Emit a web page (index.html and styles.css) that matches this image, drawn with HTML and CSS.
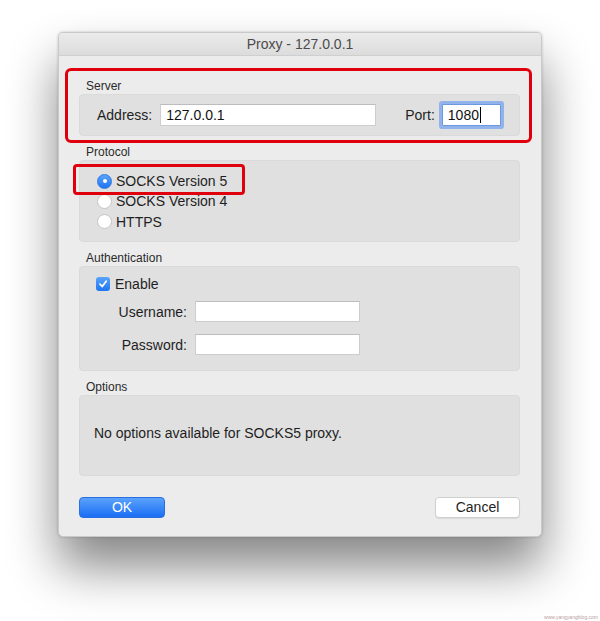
FILE: index.html
```html
<!DOCTYPE html>
<html>
<head>
<meta charset="utf-8">
<title>Proxy - 127.0.0.1</title>
<link rel="stylesheet" href="styles.css">
</head>
<body>
<div class="stage">
  <div class="window">
    <div class="titlebar">Proxy - 127.0.0.1</div>
    <div class="content">
      <div class="section-label first">Server</div>
      <div class="group server">
        <span class="lbl">Address:</span>
        <div class="input addr">127.0.0.1</div>
        <span class="lbl port-lbl">Port:</span>
        <div class="input port focused">1080<span class="caret"></span></div>
      </div>

      <div class="section-label">Protocol</div>
      <div class="group protocol">
        <div class="radio-row"><span class="radio on"></span>SOCKS Version 5</div>
        <div class="radio-row"><span class="radio"></span>SOCKS Version 4</div>
        <div class="radio-row last"><span class="radio"></span>HTTPS</div>
      </div>

      <div class="section-label">Authentication</div>
      <div class="group auth">
        <div class="check-row">
          <span class="checkbox"><svg width="10" height="10" viewBox="0 0 10 10"><path d="M2 5.2 L4.2 7.5 L8.2 2.2" fill="none" stroke="#fff" stroke-width="1.8" stroke-linecap="round" stroke-linejoin="round"/></svg></span>Enable
        </div>
        <div class="cred-grid">
          <span class="cred-lbl">Username:</span>
          <div class="input cred"></div>
          <span class="cred-lbl">Password:</span>
          <div class="input cred"></div>
        </div>
      </div>

      <div class="section-label">Options</div>
      <div class="group options">No options available for SOCKS5 proxy.</div>

      <div class="buttons">
        <div class="btn ok">OK</div>
        <div class="btn cancel">Cancel</div>
      </div>
    </div>
    <div class="annot annot-server"></div>
    <div class="annot annot-socks"></div>
  </div>
</div>
<div class="watermark">www.yangyangblog.com</div>
</body>
</html>
```
FILE: styles.css
```css
html, body {
  margin: 0;
  padding: 0;
  background: #ffffff;
  width: 600px;
  height: 621px;
  overflow: hidden;
  font-family: "Liberation Sans", Arial, sans-serif;
  color: #1e1e1e;
}

.stage {
  padding: 32px 0 0 58px;
}

.window {
  position: relative;
  width: 484px;
  height: 505px;
  box-sizing: border-box;
  background: #ececec;
  border: 1px solid #c9c9c9;
  border-radius: 5px;
  box-shadow: 0 30px 50px rgba(0, 0, 0, 0.48), 0 0 3px rgba(0, 0, 0, 0.2);
}

.titlebar {
  height: 22px;
  line-height: 23px;
  text-align: center;
  font-size: 14px;
  color: #4b4b4b;
  background: linear-gradient(#ebebeb, #dcdcdc);
  border-bottom: 1px solid #cfcfcf;
  border-radius: 4px 4px 0 0;
}

.content {
  display: flex;
  flex-direction: column;
  padding: 0 21px 0 20px;
}

.section-label {
  height: 16px;
  line-height: 16px;
  font-size: 12px;
  color: #2a2a2a;
  padding-left: 7px;
  margin-top: 8px;
}
.section-label.first {
  margin-top: 22px;
}

.group {
  box-sizing: border-box;
  background: #e0e0e0;
  border: 1px solid #dadada;
  border-radius: 4px;
  font-size: 14px;
}

.server {
  height: 42px;
  display: flex;
  align-items: center;
  padding-left: 17px;
}
.lbl {
  margin-right: 8px;
}
.port-lbl {
  margin-left: 29px;
  margin-right: 7px;
}

.input {
  box-sizing: border-box;
  background: #ffffff;
  border: 1px solid #cdcdcd;
  border-top-color: #bdbdbd;
  height: 22px;
  line-height: 20px;
  padding-left: 5px;
  font-size: 14px;
  color: #111;
}
.addr {
  width: 216px;
}
.port {
  width: 59px;
  display: flex;
  align-items: center;
}
.focused {
  border-color: #6c98e0;
  box-shadow: 0 0 0 3px #92b2ec;
  border-radius: 1px;
}
.caret {
  display: inline-block;
  width: 1px;
  height: 16px;
  background: #000;
  margin-left: 1px;
}

.protocol {
  height: 82px;
  padding-top: 10px;
  padding-left: 17px;
}
.radio-row {
  height: 20px;
  display: flex;
  align-items: center;
}
.radio-row.last {
  height: 21px;
}
.radio {
  box-sizing: border-box;
  width: 15px;
  height: 15px;
  border-radius: 50%;
  background: #ffffff;
  border: 1px solid #c4c4c4;
  margin-right: 4px;
  position: relative;
}
.radio.on {
  background: linear-gradient(#5aa4fb, #1f74f3);
  border-color: #2f78e6;
}
.radio.on::after {
  content: "";
  position: absolute;
  left: 4.5px;
  top: 4.5px;
  width: 4px;
  height: 4px;
  border-radius: 50%;
  background: #fff;
}

.auth {
  height: 105px;
  padding-top: 9px;
}
.check-row {
  height: 16px;
  display: flex;
  align-items: center;
  padding-left: 16px;
}
.checkbox {
  box-sizing: border-box;
  width: 14px;
  height: 14px;
  border-radius: 3px;
  background: linear-gradient(#5aa4fb, #1f74f3);
  margin-right: 5px;
  display: flex;
  align-items: center;
  justify-content: center;
}
.cred-grid {
  margin-top: 9px;
  display: grid;
  grid-template-columns: 107px 165px;
  column-gap: 8px;
  row-gap: 12px;
  align-items: center;
}
.cred-lbl {
  text-align: right;
}
.cred {
  height: 21px;
}

.options {
  height: 81px;
  padding: 29px 0 0 14px;
  line-height: 16px;
}

.buttons {
  display: flex;
  justify-content: space-between;
  margin-top: 21px;
}
.btn {
  box-sizing: border-box;
  height: 21px;
  line-height: 19px;
  text-align: center;
  font-size: 14px;
  border-radius: 4px;
}
.ok {
  width: 86px;
  color: #ffffff;
  background: linear-gradient(#5aa2fb, #1b6ef4);
  border: 1px solid #2a6fe0;
}
.cancel {
  width: 85px;
  color: #222;
  background: #ffffff;
  border: 1px solid #cfcfcf;
  box-shadow: 0 1px 1px rgba(0, 0, 0, 0.08);
}

.annot {
  position: absolute;
  box-sizing: border-box;
  border: 3px solid #e0000d;
  border-radius: 6px;
}
.annot-server {
  left: 6px;
  top: 35px;
  width: 467px;
  height: 75px;
}
.annot-socks {
  left: 14px;
  top: 131px;
  width: 172px;
  height: 31px;
  border-radius: 4px;
}

.watermark {
  position: absolute;
  right: 2px;
  bottom: 1px;
  font-size: 5px;
  color: #b9a0a0;
}
```
